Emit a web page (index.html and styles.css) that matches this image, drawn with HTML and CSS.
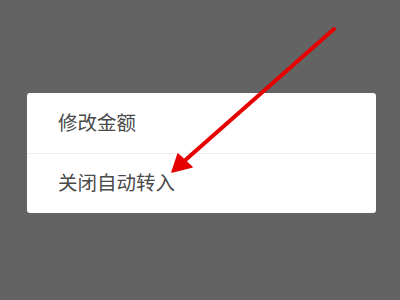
FILE: index.html
```html
<!DOCTYPE html>
<html lang="zh">
<head>
<meta charset="utf-8">
<link rel="stylesheet" href="styles.css">
</head>
<body>
<div class="screen">
  <div class="menu">
    <div class="item">修改金额</div>
    <div class="item">关闭自动转入</div>
  </div>
  <svg class="arrow" width="400" height="300" viewBox="0 0 400 300">
    <line x1="334" y1="29" x2="182" y2="163" stroke="#e60000" stroke-width="4" stroke-linecap="round"/>
    <polygon points="172,172 178,154 192,167" fill="#e60000" stroke="#e60000" stroke-width="1.5" stroke-linejoin="round"/>
  </svg>
</div>
</body>
</html>
```

FILE: styles.css
```css
html, body {
  margin: 0;
  padding: 0;
  background: #636363;
}
.screen {
  position: relative;
  width: 400px;
  height: 300px;
  overflow: hidden;
  padding-top: 93px;
  box-sizing: border-box;
}
.menu {
  margin-left: 27px;
  width: 349px;
  background: #ffffff;
  border-radius: 3px;
}
.item {
  height: 60px;
  box-sizing: border-box;
  padding-bottom: 4px;
  display: flex;
  align-items: center;
  padding-left: 31px;
  font-family: "Noto Sans CJK SC", sans-serif;
  font-size: 19.5px;
  color: #4a4a4a;
}
.item + .item {
  border-top: 1px solid #efefef;
}
.arrow {
  position: absolute;
  left: 0;
  top: 0;
}
```
